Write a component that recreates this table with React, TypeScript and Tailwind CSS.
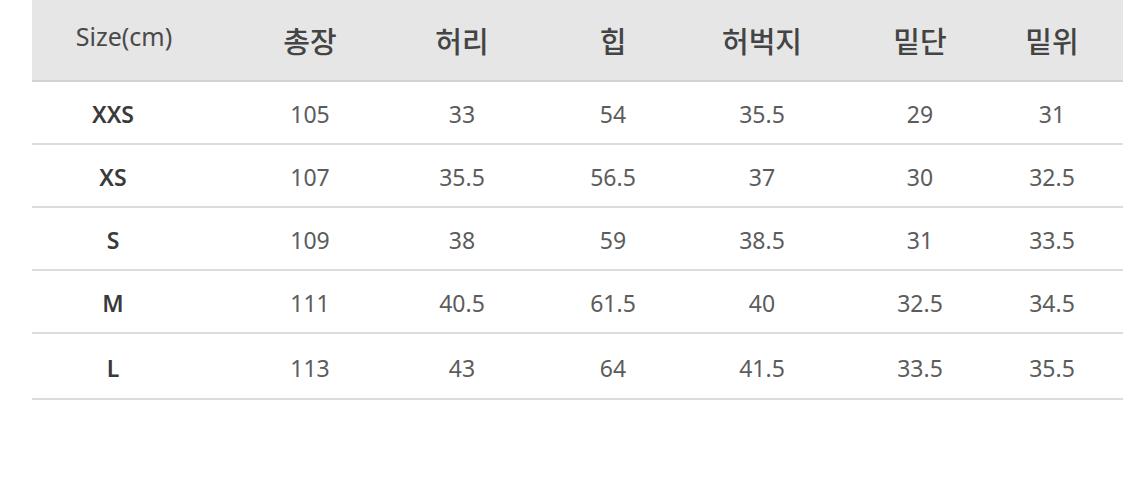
import React from 'react';

const headers = ['총장', '허리', '힙', '허벅지', '밑단', '밑위'];

const rows: { size: string; values: string[] }[] = [
  { size: 'XXS', values: ['105', '33', '54', '35.5', '29', '31'] },
  { size: 'XS', values: ['107', '35.5', '56.5', '37', '30', '32.5'] },
  { size: 'S', values: ['109', '38', '59', '38.5', '31', '33.5'] },
  { size: 'M', values: ['111', '40.5', '61.5', '40', '32.5', '34.5'] },
  { size: 'L', values: ['113', '43', '64', '41.5', '33.5', '35.5'] },
];

// column widths in px, last column padded so its text sits left of centre
const grid = 'grid grid-cols-[202px_152px_152px_150px_148px_168px_119px]';

export default function App() {
  return (
    <div className="w-[1125px] h-[497px] bg-white overflow-hidden font-['Noto_Sans','Noto_Sans_CJK_KR',sans-serif]">
      <div className="ml-[32px] w-[1091px]">
        <div className={`${grid} h-[82px] bg-[#e6e6e6] border-b-2 border-[#d3d3d3] items-center`}>
          <div className="pr-[18px] text-center text-[25px] text-[#4a4a4a] pb-[6px]">Size(cm)</div>
          {headers.map((h, i) => (
            <div
              key={h}
              className={`pt-[2px] text-center text-[29px] font-medium text-[#444] font-['Noto_Sans_CJK_KR',sans-serif] ${
                i === headers.length - 1 ? 'pr-[23px]' : ''
              }`}
            >
              {h}
            </div>
          ))}
        </div>
        {rows.map((r, ri) => (
          <div
            key={r.size}
            className={`${grid} ${ri === rows.length - 1 ? 'h-[66px]' : 'h-[63px]'} border-b-2 border-[#dcdcdc] items-center`}
          >
            <div className="pr-[40px] pt-[4px] text-center text-[23px] font-semibold text-[#3a3a3a]">{r.size}</div>
            {r.values.map((v, i) => (
              <div
                key={i}
                className={`pt-[4px] text-center text-[23px] text-[#5c5c5c] ${
                  i === r.values.length - 1 ? 'pr-[23px]' : ''
                }`}
              >
                {v}
              </div>
            ))}
          </div>
        ))}
      </div>
    </div>
  );
}
